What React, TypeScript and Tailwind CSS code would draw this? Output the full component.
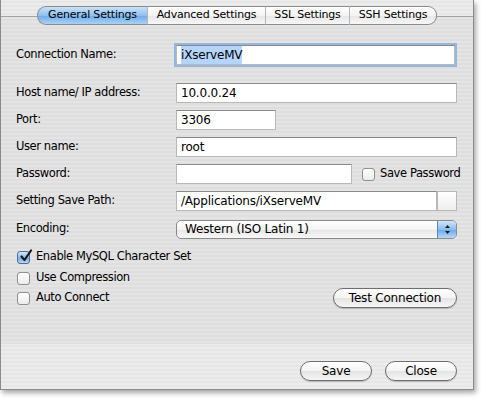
import React from "react";

const font = { fontFamily: '"DejaVu Sans", "Liberation Sans", sans-serif' };

const stripesLight =
  "bg-[repeating-linear-gradient(0deg,#ececec_0px,#ececec_2px,#e6e6e6_2px,#e6e6e6_4px)]";
const stripesDark =
  "bg-[repeating-linear-gradient(0deg,#e4e4e4_0px,#e4e4e4_2px,#dedede_2px,#dedede_4px)]";

const Tab = ({ label, w, active, first, last }: { label: string; w: string; active?: boolean; first?: boolean; last?: boolean }) => (
  <div
    className={
      "h-[19px] flex items-center justify-center text-[11px] tracking-[-0.2px] border-y border-[#8c8c8c] " +
      w +
      (first ? " rounded-l-[9px] border-l" : " border-l border-l-[#b5b5b5]") +
      (last ? " rounded-r-[9px] border-r border-r-[#8c8c8c]" : "") +
      (active
        ? " bg-[linear-gradient(#c9e1f9,#8fc0f0_50%,#6faae8_51%,#a7d2f8)] border-[#4a6f9b]"
        : " bg-[linear-gradient(#ffffff,#f3f3f3_50%,#e6e6e6_51%,#f7f7f7)]")
    }
  >
    {label}
  </div>
);

const TextInput = ({ value, w, focused }: { value?: string; w: string; focused?: boolean }) => (
  <div
    className={
      "h-[20px] bg-white flex items-center pl-[4px] text-[12px] tracking-[-0.2px] border border-[#b8b8b8] border-t-[#8a8a8a] " +
      w +
      (focused ? " shadow-[0_0_0_2px_#93b7e0] border-[#7a9cc6]" : "")
    }
  >
    {focused ? <span className="bg-[#b5d5ff]">{value}</span> : value}
  </div>
);

const Check = ({ checked }: { checked?: boolean }) => (
  <div
    className={
      "w-[13px] h-[13px] rounded-[3px] border relative shrink-0 " +
      (checked
        ? "border-[#4d6e98] bg-[linear-gradient(#d3e7fb,#8cbdf0_50%,#6aa6e8_51%,#b4daf9)]"
        : "border-[#8e8e8e] bg-[linear-gradient(#ffffff,#ececec)]")
    }
  >
    {checked && (
      <svg className="absolute left-[1px] -top-[3px]" width="14" height="14" viewBox="0 0 14 14">
        <path d="M2.5 7.5 L5.5 11 L12 1.5" fill="none" stroke="#1a1a1a" strokeWidth="2.2" strokeLinecap="round" strokeLinejoin="round" />
      </svg>
    )}
  </div>
);

const PillButton = ({ label, w }: { label: string; w: string }) => (
  <div
    className={
      "h-[20px] rounded-full border border-[#6e6e6e] flex items-center justify-center text-[12px] tracking-[-0.2px] bg-[linear-gradient(#ffffff,#f4f4f4_50%,#e4e4e4_51%,#f6f6f6)] shadow-[0_1px_1px_rgba(0,0,0,0.2)] " +
      w
    }
  >
    {label}
  </div>
);

const Row = ({ label, children, mt }: { label: string; children: React.ReactNode; mt: string }) => (
  <div className={"flex items-center h-[20px] " + mt}>
    <div className="w-[175px] shrink-0 text-[11.5px] tracking-[-0.4px] pl-[15px]">{label}</div>
    {children}
  </div>
);

export default function App() {
  return (
    <div className="w-[481px] h-[398px] bg-white text-black" style={font}>
      <div
        className={
          "w-[474px] h-[390px] border-x border-b border-[#8a8a8a] shadow-[2px_3px_5px_rgba(0,0,0,0.35)] flex flex-col " +
          stripesLight
        }
      >
        <div className={"mt-[16px] h-[328px] border-t border-[#a3a3a3] border-b border-b-[#e0e0e0] " + stripesDark}>
          <div className="flex -mt-[11px] ml-[36px]">
            <Tab label="General Settings" w="w-[110px]" active first />
            <Tab label="Advanced Settings" w="w-[118px]" />
            <Tab label="SSL Settings" w="w-[84px]" />
            <Tab label="SSH Settings" w="w-[88px]" last />
          </div>

          <Row label="Connection Name:" mt="mt-[20px]">
            <TextInput value="iXserveMV" w="w-[279px]" focused />
          </Row>
          <Row label="Host name/ IP address:" mt="mt-[18px]">
            <TextInput value="10.0.0.24" w="w-[281px]" />
          </Row>
          <Row label="Port:" mt="mt-[7px]">
            <TextInput value="3306" w="w-[100px]" />
          </Row>
          <Row label="User name:" mt="mt-[7px]">
            <TextInput value="root" w="w-[281px]" />
          </Row>
          <Row label="Password:" mt="mt-[7px]">
            <TextInput w="w-[176px]" />
            <div className="ml-[10px]">
              <Check />
            </div>
            <span className="ml-[5px] text-[11.5px] tracking-[-0.4px]">Save Password</span>
          </Row>
          <Row label="Setting Save Path:" mt="mt-[7px]">
            <TextInput value="/Applications/iXserveMV" w="w-[261px]" />
            <div className="w-[20px] h-[20px] border border-[#b8b8b8] bg-[linear-gradient(#ffffff,#eeeeee)]" />
          </Row>
          <Row label="Encoding:" mt="mt-[8px]">
            <div className="w-[281px] h-[19px] rounded-[5px] border border-[#8a8a8a] flex overflow-hidden bg-[linear-gradient(#ffffff,#f4f4f4_50%,#e6e6e6_51%,#f8f8f8)]">
              <div className="flex-1 flex items-center pl-[8px] text-[12px] tracking-[-0.2px]">Western (ISO Latin 1)</div>
              <div className="w-[19px] border-l border-[#5f86b8] bg-[linear-gradient(#cfe5fb,#8cbdf0_50%,#6aa6e8_51%,#b4daf9)] flex items-center justify-center">
                <svg width="7" height="11" viewBox="0 0 7 11">
                  <path d="M3.5 1 L6 4 L1 4 Z" fill="#1a1a1a" />
                  <path d="M3.5 10 L6 7 L1 7 Z" fill="#1a1a1a" />
                </svg>
              </div>
            </div>
          </Row>

          <div className="flex items-center h-[14px] mt-[11px] pl-[16px]">
            <Check checked />
            <span className="ml-[6px] text-[11.5px] tracking-[-0.4px]">Enable MySQL Character Set</span>
          </div>
          <div className="flex items-center h-[14px] mt-[7px] pl-[16px]">
            <Check />
            <span className="ml-[6px] text-[11.5px] tracking-[-0.4px]">Use Compression</span>
          </div>
          <div className="flex items-center h-[20px] mt-[3px] pl-[16px]">
            <Check />
            <span className="ml-[6px] text-[11.5px] tracking-[-0.4px]">Auto Connect</span>
            <div className="ml-auto mr-[16px]">
              <PillButton label="Test Connection" w="w-[124px]" />
            </div>
          </div>
        </div>

        <div className="flex justify-end gap-[13px] pr-[16px] mt-[17px]">
          <PillButton label="Save" w="w-[72px]" />
          <PillButton label="Close" w="w-[72px]" />
        </div>
      </div>
    </div>
  );
}
